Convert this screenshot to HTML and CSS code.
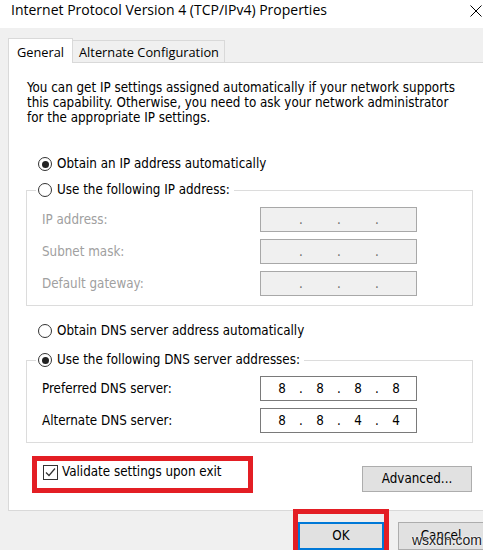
FILE: index.html
```html
<!DOCTYPE html>
<html>
<head>
<meta charset="utf-8">
<title>Internet Protocol Version 4 (TCP/IPv4) Properties</title>
<link rel="stylesheet" href="styles.css">
</head>
<body>
<div class="titlebar">
  <span class="title">Internet Protocol Version 4 (TCP/IPv4) Properties</span>
  <svg class="close" width="12" height="12" viewBox="0 0 12 12"><path d="M0.5 0.5L11.5 11.5M11.5 0.5L0.5 11.5" stroke="#000" stroke-width="1" fill="none"/></svg>
</div>
<div class="dialog">
  <div class="tabs">
    <div class="tab active">General</div>
    <div class="tab alt">Alternate Configuration</div>
  </div>
  <div class="panel">
    <p class="desc">You can get IP settings assigned automatically if your network supports<br>this capability. Otherwise, you need to ask your network administrator<br>for the appropriate IP settings.</p>
    <div class="radio-row first"><span class="radio checked"></span>Obtain an IP address automatically</div>
    <fieldset class="group ipgroup">
      <legend><span class="radio"></span>Use the following IP address:</legend>
      <div class="fields disabled">
        <span class="lbl">IP address:</span>
        <div class="ip"><span class="oct"></span><span class="dot">.</span><span class="oct"></span><span class="dot">.</span><span class="oct"></span><span class="dot">.</span><span class="oct"></span></div>
        <span class="lbl">Subnet mask:</span>
        <div class="ip"><span class="oct"></span><span class="dot">.</span><span class="oct"></span><span class="dot">.</span><span class="oct"></span><span class="dot">.</span><span class="oct"></span></div>
        <span class="lbl">Default gateway:</span>
        <div class="ip"><span class="oct"></span><span class="dot">.</span><span class="oct"></span><span class="dot">.</span><span class="oct"></span><span class="dot">.</span><span class="oct"></span></div>
      </div>
    </fieldset>
    <div class="radio-row dns"><span class="radio"></span>Obtain DNS server address automatically</div>
    <fieldset class="group dnsgroup">
      <legend><span class="radio checked"></span>Use the following DNS server addresses:</legend>
      <div class="fields">
        <span class="lbl">Preferred DNS server:</span>
        <div class="ip"><span class="oct">8</span><span class="dot">.</span><span class="oct">8</span><span class="dot">.</span><span class="oct">8</span><span class="dot">.</span><span class="oct">8</span></div>
        <span class="lbl">Alternate DNS server:</span>
        <div class="ip"><span class="oct">8</span><span class="dot">.</span><span class="oct">8</span><span class="dot">.</span><span class="oct">4</span><span class="dot">.</span><span class="oct">4</span></div>
      </div>
    </fieldset>
    <div class="bottom">
      <div class="check-row"><span class="checkbox"><svg width="13" height="13" viewBox="0 0 13 13"><path d="M2 6.5L5 9.5L11 2.5" stroke="#333" stroke-width="1.2" fill="none"/></svg></span>Validate settings upon exit</div>
      <div class="btn advanced">Advanced...</div>
    </div>
  </div>
  <div class="buttons">
    <div class="btn ok">OK</div>
    <div class="btn cancel">Cancel</div>
  </div>
</div>
<div class="highlight hl-check"></div>
<div class="highlight hl-ok"></div>
<div class="watermark">wsxdn.com</div>
</body>
</html>
```
FILE: styles.css
```css
html, body {
  margin: 0;
  padding: 0;
}
body {
  background: #f0f0f0;
  width: 483px;
  height: 550px;
  overflow: hidden;
  position: relative;
  font-family: "DejaVu Sans Condensed", "DejaVu Sans", sans-serif;
  font-size: 13.3px;
  color: #000;
}
.titlebar {
  height: 28px;
  background: #fff;
  display: flex;
  justify-content: space-between;
  align-items: flex-start;
}
.title {
  font-family: "Open Sans", sans-serif;
  font-size: 14px;
  line-height: 18px;
  padding: 1px 0 0 11px;
  color: #000;
}
.close {
  margin: 5px 1px 0 0;
}
.dialog {
  width: 498px;
  box-sizing: border-box;
  padding: 10px 0 0 8px;
}
.tabs {
  display: flex;
  align-items: flex-end;
  height: 24px;
}
.tab {
  font-family: "Open Sans", sans-serif;
  font-size: 12.8px;
  box-sizing: border-box;
  border: 1px solid #d9d9d9;
  border-bottom: 0;
  background: #f0f0f0;
  color: #000;
  white-space: nowrap;
}
.tab.active {
  width: 65px;
  height: 25px;
  margin-bottom: -1px;
  background: #fff;
  position: relative;
  z-index: 1;
  padding: 3px 0 0 8px;
  line-height: 20px;
}
.tab.alt {
  width: 152px;
  height: 22px;
  border-left: 0;
  padding: 1px 0 0 6px;
  line-height: 20px;
}
.panel {
  width: 482px;
  height: 449px;
  box-sizing: border-box;
  background: #fff;
  border: 1px solid #d9d9d9;
}
.desc {
  margin: 0;
  padding: 17px 0 0 18px;
  line-height: 15px;
  white-space: nowrap;
}
.radio-row, .group legend {
  display: flex;
  align-items: center;
  gap: 5px;
  height: 20px;
  line-height: 20px;
  white-space: nowrap;
}
.radio-row.first {
  margin: 29px 0 0 29px;
}
.radio-row.dns {
  margin: 15px 0 0 29px;
}
.radio {
  flex: none;
  width: 14px;
  height: 14px;
  box-sizing: border-box;
  border: 1px solid #333;
  border-radius: 50%;
  background: #fff;
  position: relative;
}
.radio.checked::after {
  content: "";
  position: absolute;
  left: 2.5px;
  top: 2.5px;
  width: 7px;
  height: 7px;
  border-radius: 50%;
  background: #222;
}
.group {
  margin: 0 0 0 17px;
  width: 447px;
  min-width: 0;
  box-sizing: border-box;
  border: 1px solid #dcdcdc;
  padding: 7px 0 9px 9px;
}
.ipgroup {
  margin-top: 6px;
}
.dnsgroup {
  margin-top: 9px;
  padding-top: 6px;
}
.group legend {
  padding: 0 4px 0 2px;
}
.fields {
  display: grid;
  grid-template-columns: 218px 157px;
  row-gap: 7px;
  padding-left: 6px;
  align-items: center;
}
.ip {
  height: 25px;
  box-sizing: border-box;
  border: 1px solid #7a7a7a;
  background: #fff;
  display: flex;
  align-items: center;
  padding-left: 7px;
}
.ip .oct {
  width: 28px;
  text-align: center;
}
.ip .dot {
  width: 10px;
  text-align: center;
}
.disabled .lbl {
  color: #a0a0a0;
}
.disabled .ip {
  background: #f0f0f0;
  border-color: #a8a8a8;
  color: #6d6d6d;
}
.bottom {
  display: flex;
  justify-content: space-between;
  align-items: flex-start;
  margin: 21px 17px 0 34px;
}
.check-row {
  display: flex;
  align-items: center;
  gap: 4px;
  height: 16px;
  line-height: 16px;
  white-space: nowrap;
}
.checkbox {
  flex: none;
  width: 15px;
  height: 15px;
  box-sizing: border-box;
  border: 1px solid #333;
  background: #fff;
  display: flex;
}
.btn {
  box-sizing: border-box;
  background: #e1e1e1;
  border: 1px solid #adadad;
  text-align: center;
  white-space: nowrap;
}
.advanced {
  width: 110px;
  height: 26px;
  line-height: 24px;
  margin-top: 2px;
}
.buttons {
  display: flex;
  justify-content: flex-end;
  gap: 14px;
  padding-right: 14px;
  margin-top: 11px;
}
.ok, .cancel {
  width: 86px;
  height: 28px;
  line-height: 26px;
}
.ok {
  border: 2px solid #0078d7;
  line-height: 24px;
}
.highlight {
  position: absolute;
  box-sizing: border-box;
  border: 5px solid #e31e24;
}
.hl-check {
  left: 32px;
  top: 456px;
  width: 221px;
  height: 37px;
}
.hl-ok {
  left: 293px;
  top: 509px;
  width: 96px;
  height: 60px;
}
.watermark {
  position: absolute;
  left: 412px;
  top: 532px;
  font-family: "Liberation Sans", sans-serif;
  font-size: 14px;
  line-height: 16px;
  color: #222;
  text-shadow: 0 0 2px #fff, 0 0 2px #fff;
}
```
